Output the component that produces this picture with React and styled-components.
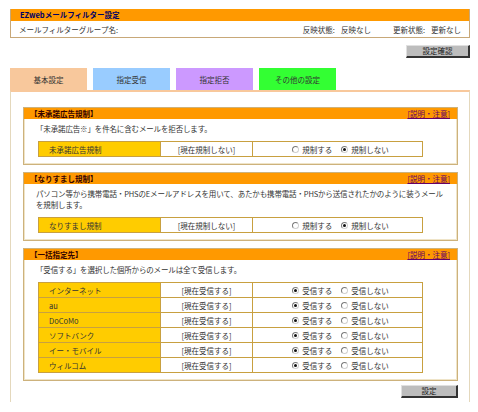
import styled, { createGlobalStyle } from "styled-components";

const GlobalStyle = createGlobalStyle`
    body {
        margin: 0;
        background: #fff;
        font-family: "Noto Sans CJK JP", "DejaVu Sans", sans-serif;
        font-size: 7.5px;
        color: #333;
    }
`;

const Page = styled.div`
    width: 460px;
    padding: 9px 8px 0 10px;
`;

const HeaderBox = styled.div`
    border: 1px solid #c8a878;
    border-top: none;
`;

const HeaderTitle = styled.div`
    background: #ff9900;
    height: 12px;
    line-height: 12px;
    padding-left: 9px;
    color: #000066;
    font-weight: bold;
`;

const HeaderRow = styled.div`
    display: flex;
    align-items: center;
    justify-content: space-between;
    height: 16px;
    padding: 0 8px 0 8px;

    .status {
        display: flex;
        gap: 22px;
    }

    .status span {
        display: flex;
        gap: 6px;
    }
`;

const ButtonRow = styled.div`
    display: flex;
    justify-content: flex-end;
    margin-top: ${(p) => p.top || 0}px;
`;

const GrayButton = styled.div`
    box-sizing: border-box;
    width: ${(p) => p.width}px;
    height: 13px;
    line-height: 10px;
    text-align: center;
    background: #bdbdbd;
    color: #222;
    border-top: 1px solid #e0e0e0;
    border-left: 1px solid #e0e0e0;
    border-right: 2px solid #333;
    border-bottom: 2px solid #333;
`;

const Tabs = styled.div`
    display: flex;
    gap: 6px;
    margin-top: 10px;
`;

const Tab = styled.div`
    width: 77px;
    height: 22px;
    display: flex;
    align-items: center;
    justify-content: center;
    background: ${(p) => p.color};
    color: #333;
`;

const Panel = styled.div`
    border-top: 2px solid #f8c89c;
    border-left: 1px solid #e4d8bc;
    border-right: 1px solid #e4d8bc;
    padding: 15px 11px 4px 12px;
`;

const Section = styled.div`
    border: 1px solid #cdb27c;
    box-shadow: inset 0 0 0 1px #efe4c8;
    margin-bottom: 7px;
    background: #fff;
`;

const SectionHead = styled.div`
    display: flex;
    justify-content: space-between;
    align-items: center;
    height: 11px;
    padding: 0 7px 0 6px;
    background: #ff9900;

    .title {
        color: #330000;
        font-weight: bold;
    }

    a {
        color: #660066;
        text-decoration: underline;
    }
`;

const SectionBody = styled.div`
    padding: 4px 0 7px 12px;

    p {
        margin: 0;
        line-height: 11px;
        white-space: nowrap;
        letter-spacing: -0.15px;
    }
`;

const SettingTable = styled.table`
    border-collapse: collapse;
    width: 385px;
    margin: 7px 0 0 2px;
    border: 1px solid #b8953a;

    td {
        height: 14px;
        padding: 0;
        border: 1px solid #c8a040;
    }

    td.label {
        width: 122px;
        background: #ffcc00;
        padding-left: 10px;
        box-sizing: border-box;
    }

    td.now {
        width: 91px;
        text-align: center;
    }
`;

const RadioGroup = styled.div`
    display: flex;
    justify-content: center;
    gap: 9px;
    padding-left: 6px;
`;

const RadioOption = styled.span`
    display: flex;
    align-items: center;
    gap: 3px;
`;

const RadioMark = styled.span`
    box-sizing: border-box;
    width: 7px;
    height: 7px;
    border-radius: 50%;
    border: 1px solid #7a7a7a;
    border-right-color: #d0d0d0;
    border-bottom-color: #d0d0d0;
    background: #fff;
    display: flex;
    align-items: center;
    justify-content: center;

    &::after {
        content: "";
        width: 3px;
        height: 3px;
        border-radius: 50%;
        background: ${(p) => (p.checked ? "#111" : "transparent")};
    }
`;

function Radios({ options, selected }) {
    return (
        <RadioGroup>
            {options.map((opt, i) => (
                <RadioOption key={i}>
                    <RadioMark checked={i === selected} />
                    {opt}
                </RadioOption>
            ))}
        </RadioGroup>
    );
}

const carriers = ["インターネット", "au", "DoCoMo", "ソフトバンク", "イー・モバイル", "ウィルコム"];

function SettingSection({ title, children }) {
    return (
        <Section>
            <SectionHead>
                <span className="title">{title}</span>
                <a href="#">[説明・注意]</a>
            </SectionHead>
            <SectionBody>{children}</SectionBody>
        </Section>
    );
}

export default function App() {
    return (
        <Page>
            <GlobalStyle />
            <HeaderBox>
                <HeaderTitle>EZwebメールフィルター設定</HeaderTitle>
                <HeaderRow>
                    <span>メールフィルターグループ名:</span>
                    <div className="status">
                        <span><span>反映状態:</span><span>反映なし</span></span>
                        <span><span>更新状態:</span><span>更新なし</span></span>
                    </div>
                </HeaderRow>
            </HeaderBox>

            <ButtonRow top={7}>
                <GrayButton width={64}>設定確認</GrayButton>
            </ButtonRow>

            <Tabs>
                <Tab color="#f8c89c">基本設定</Tab>
                <Tab color="#99ccff">指定受信</Tab>
                <Tab color="#cc99ff">指定拒否</Tab>
                <Tab color="#33ff33">その他の設定</Tab>
            </Tabs>

            <Panel>
                <SettingSection title="【未承諾広告規制】">
                    <p>「未承諾広告※」を件名に含むメールを拒否します。</p>
                    <SettingTable>
                        <tbody>
                            <tr>
                                <td className="label">未承諾広告規制</td>
                                <td className="now">[現在規制しない]</td>
                                <td><Radios options={["規制する", "規制しない"]} selected={1} /></td>
                            </tr>
                        </tbody>
                    </SettingTable>
                </SettingSection>

                <SettingSection title="【なりすまし規制】">
                    <p>パソコン等から携帯電話・PHSのEメールアドレスを用いて、あたかも携帯電話・PHSから送信されたかのように装うメール<br />を規制します。</p>
                    <SettingTable>
                        <tbody>
                            <tr>
                                <td className="label">なりすまし規制</td>
                                <td className="now">[現在規制しない]</td>
                                <td><Radios options={["規制する", "規制しない"]} selected={1} /></td>
                            </tr>
                        </tbody>
                    </SettingTable>
                </SettingSection>

                <SettingSection title="【一括指定先】">
                    <p>「受信する」を選択した個所からのメールは全て受信します。</p>
                    <SettingTable>
                        <tbody>
                            {carriers.map((name) => (
                                <tr key={name}>
                                    <td className="label">{name}</td>
                                    <td className="now">[現在受信する]</td>
                                    <td><Radios options={["受信する", "受信しない"]} selected={0} /></td>
                                </tr>
                            ))}
                        </tbody>
                    </SettingTable>
                </SettingSection>

                <ButtonRow top={-3}>
                    <GrayButton width={57}>設定</GrayButton>
                </ButtonRow>
            </Panel>
        </Page>
    );
}
